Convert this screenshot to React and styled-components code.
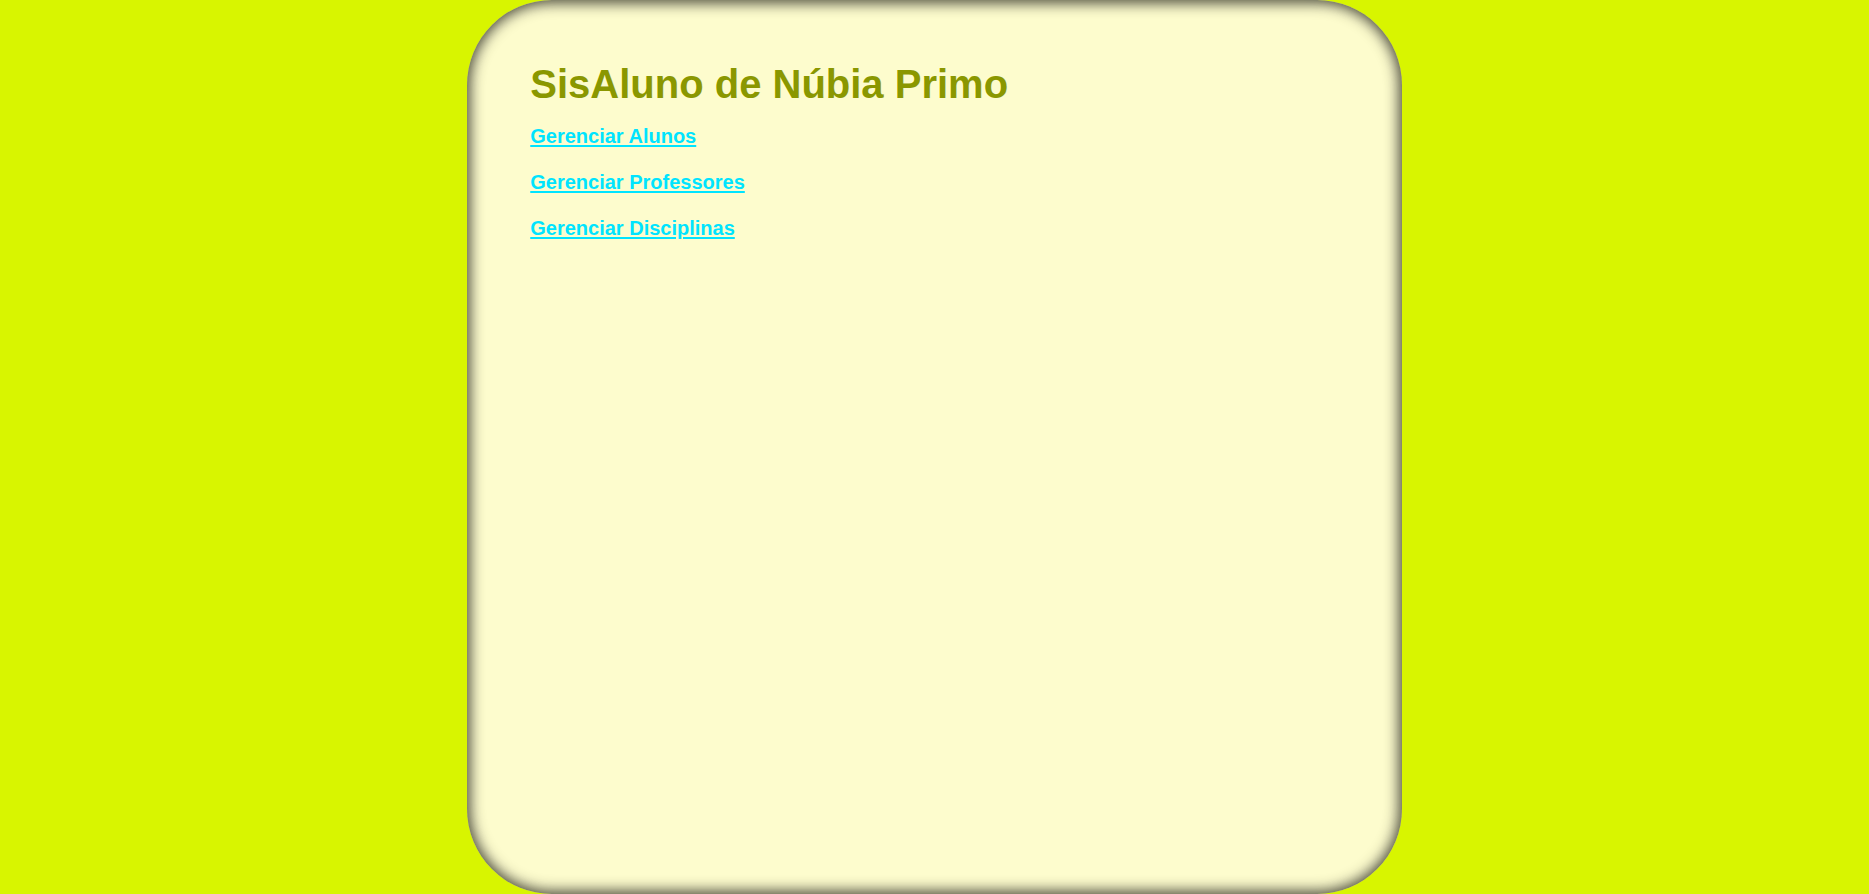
import React from "react";
import styled, { createGlobalStyle } from "styled-components";

const Global = createGlobalStyle`
  html, body { margin: 0; padding: 0; }
  body {
    background: #d8f500;
    font-family: "Liberation Sans", Arial, sans-serif;
  }
`;

const Panel = styled.main`
  box-sizing: border-box;
  width: 50%;
  height: 100vh;
  margin: 0 auto;
  padding: 61px 63px 0;
  background: #fdfccd;
  border-radius: 85px;
  box-shadow: inset 0 0 14px 3px rgba(50, 50, 40, 0.9);
`;

const Title = styled.h1`
  margin: 0 0 6px;
  font-size: 40px;
  line-height: 46px;
  font-weight: bold;
  color: #8a9700;
`;

const Nav = styled.nav`
  display: flex;
  flex-direction: column;
  align-items: flex-start;
`;

const NavLink = styled.a`
  display: block;
  font-size: 20px;
  line-height: 46px;
  font-weight: bold;
  color: #00e4ff;
  text-decoration: underline;
  text-decoration-thickness: 2px;
  text-underline-offset: 2px;
`;

const links = ["Gerenciar Alunos", "Gerenciar Professores", "Gerenciar Disciplinas"];

export default function App() {
  return (
    <>
      <Global />
      <Panel>
        <Title>SisAluno de Núbia Primo</Title>
        <Nav>
          {links.map((l) => (
            <NavLink key={l} href="#">{l}</NavLink>
          ))}
        </Nav>
      </Panel>
    </>
  );
}
